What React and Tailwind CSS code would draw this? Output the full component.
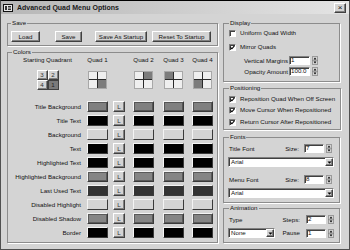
import React from "react";

const raised =
  "bg-[#d4d4d4] border border-t-white border-l-white border-r-[#404040] border-b-[#404040] shadow-[inset_-1px_-1px_0_#808080]";
const sunken =
  "bg-white border border-t-[#808080] border-l-[#808080] border-r-white border-b-white shadow-[inset_1px_1px_0_#404040]";

const Group = ({ label, className = "", legend = "", children }) => (
  <fieldset className={`border border-[#8c8c8c] shadow-[1px_1px_0_#fff] ${className}`}>
    <legend className={`px-[1px] leading-[8px] ${legend}`}>{label}</legend>
    {children}
  </fieldset>
);

const Button = ({ className = "", children }) => (
  <div className={`${raised} h-[11px] flex items-center justify-center whitespace-nowrap ${className}`}>
    {children}
  </div>
);

const Arrows = ({ className = "" }) => (
  <svg width="6" height="9" viewBox="0 0 6 9" className={className}>
    <rect x="0.5" y="0.5" width="5" height="8" fill="#d4d4d4" stroke="#9a9a9a" strokeWidth="1" />
    <line x1="0" y1="4.5" x2="6" y2="4.5" stroke="#808080" strokeWidth="0.6" />
    <path d="M1.6 3.4 L3 1.6 L4.4 3.4Z" fill="#000" />
    <path d="M1.6 5.6 L3 7.4 L4.4 5.6Z" fill="#000" />
  </svg>
);

const Spinner = ({ value, w = "w-[21px]", gap = "ml-[2px]" }) => (
  <div className="flex items-center">
    <div className={`${sunken} ${w} h-[9px] pl-[1px] flex items-center leading-none`}>{value}</div>
    <Arrows className={gap} />
  </div>
);

const DownTri = () => (
  <svg width="5" height="3" viewBox="0 0 5 3">
    <path d="M0.5 0.5 L4.5 0.5 L2.5 2.8Z" fill="#000" />
  </svg>
);

const Select = ({ value, className = "" }) => (
  <div className={`${sunken} h-[10px] flex items-center ${className}`}>
    <span className="flex-1 pl-[2px] leading-none">{value}</span>
    <div className={`${raised} w-[8px] h-full flex items-center justify-center`}>
      <DownTri />
    </div>
  </div>
);

const Check = ({ checked, label, className = "" }) => (
  <div className={`flex items-center h-[8px] ${className}`}>
    <div className={`${sunken} w-[7px] h-[7px] flex items-center justify-center`}>
      {checked && (
        <svg width="5" height="5" viewBox="0 0 5 5">
          <path d="M0.6 2.4 L1.9 3.8 L4.4 0.9" stroke="#000" strokeWidth="1.1" fill="none" />
        </svg>
      )}
    </div>
    <span className="ml-[4px] whitespace-nowrap">{label}</span>
  </div>
);

const widths = [
  "w-[79px]",
  "w-[21px]",
  "ml-[5px] w-[12px]",
  "ml-[8px] w-[21px]",
  "ml-[9px] w-[21px]",
  "ml-[8px] w-[21px]",
];

const Cols = ({ cells, first = "justify-center", className = "" }) => (
  <div className={`flex items-center ${className}`}>
    {cells.map((c, i) => (
      <div key={i} className={`${widths[i]} shrink-0 flex ${i === 0 ? first : "justify-center"} whitespace-nowrap`}>
        {c}
      </div>
    ))}
  </div>
);

const QuadIcon = ({ on }) => (
  <div className="w-[19px] h-[18px] border border-[#a8a8a8] grid grid-cols-2 grid-rows-2 gap-[1px] bg-[#2a2a2a]">
    {[0, 1, 2, 3].map((i) => (
      <div key={i} className={i === on ? "bg-[#7c7c7c]" : "bg-[#efefef]"} />
    ))}
  </div>
);

const Swatch = ({ color }) => (
  <div
    className={`w-[21px] h-[11px] border border-t-[#f4f4f4] border-l-[#f4f4f4] border-r-[#3a3a3a] border-b-[#3a3a3a] ${color}`}
  />
);

const rows = [
  ["Title Background", "bg-[#808080] shadow-[inset_0_0_0_1px_#555]"],
  ["Title Text", "bg-black border-black"],
  ["Background", "bg-[#d4d4d4]"],
  ["Text", "bg-black border-black"],
  ["Highlighted Text", "bg-black border-black"],
  ["Highlighted Background", "bg-[#858585] shadow-[inset_0_0_0_1px_#5a5a5a]"],
  ["Last Used Text", "bg-[#333] border-[#333]"],
  ["Disabled Highlight", "bg-[#d4d4d4]"],
  ["Disabled Shadow", "bg-[#858585] shadow-[inset_0_0_0_1px_#5a5a5a]"],
  ["Border", "bg-black border-black"],
];

export default function App() {
  return (
    <div className="w-[350px] h-[250px] bg-[#d4d4d4] border border-[#505050] border-t-black flex flex-col overflow-hidden font-['Liberation_Sans',Arial,sans-serif] text-[6.2px] leading-[8px] text-[#111]">
      <div className="h-[13px] shrink-0 flex items-center bg-linear-to-r from-[#b6b6b6] to-[#e4e4e4]">
        <svg width="10" height="8" viewBox="0 0 10 8" className="ml-[2px]">
          <rect x="0.5" y="0.5" width="9" height="7" fill="#e8e8e8" stroke="#111" />
          <rect x="2" y="2" width="2" height="4" fill="#333" />
          <rect x="5" y="2" width="3" height="1.5" fill="#333" />
          <rect x="5" y="4.5" width="3" height="1.5" fill="#333" />
        </svg>
        <span className="ml-[4px] text-[7px] font-bold text-[#1a1a1a] whitespace-nowrap">Advanced Quad Menu Options</span>
        <div className={`${raised} ml-auto mr-[3px] w-[12px] h-[10px] flex items-center justify-center text-[8px] leading-none`}>
          ×
        </div>
      </div>

      <div className="flex gap-[5px] pl-[6px] pt-[5px]">
        <div className="w-[211px] shrink-0 flex flex-col">
          <Group label="Save" className="px-[3px] pb-[3px]">
            <div className="mt-[4px] flex">
              <Button className="w-[29px]">Load</Button>
              <Button className="ml-[15px] w-[27px]">Save</Button>
              <Button className="ml-[13px] w-[52px]">Save As Startup</Button>
              <Button className="ml-[5px] w-[59px]">Reset To Startup</Button>
            </div>
          </Group>

          <Group label="Colors" className="mt-[2px] pb-[4px]" legend="ml-[4px]">
            <Cols className="h-[8px]" cells={["Starting Quadrant", "Quad 1", "", "Quad 2", "Quad 3", "Quad 4"]} />
            <Cols
              className="mt-[5px] h-[21px]"
              cells={[
                <div className="grid grid-cols-2 w-[22px]">
                  <Button className="h-[10px]! text-[#333]">3</Button>
                  <Button className="h-[10px]! text-[#333]">2</Button>
                  <Button className="h-[10px]! text-[#333]">4</Button>
                  <div className="h-[10px] bg-[#7a7a7a] border border-[#404040] flex items-center justify-center text-[#222]">1</div>
                </div>,
                <QuadIcon on={3} />,
                "",
                <QuadIcon on={1} />,
                <QuadIcon on={0} />,
                <QuadIcon on={2} />,
              ]}
            />
            <div className="mt-[11px] flex flex-col gap-[3px]">
              {rows.map(([name, color]) => (
                <Cols
                  key={name}
                  className="h-[11px]"
                  first="justify-end pr-[6px]"
                  cells={[
                    name,
                    <Swatch color={color} />,
                    <Button className="w-[12px] text-[#333]">L</Button>,
                    <Swatch color={color} />,
                    <Swatch color={color} />,
                    <Swatch color={color} />,
                  ]}
                />
              ))}
            </div>
          </Group>
        </div>

        <div className="w-[117px] shrink-0 flex flex-col">
          <Group label="Display" className="px-[5px] pb-[5px]">
            <Check className="mt-[2px]" label="Uniform Quad Width" />
            <Check className="mt-[6px]" checked label="Mirror Quads" />
            <div className="mt-[5px] flex items-center h-[9px]">
              <span className="w-[59px] text-right whitespace-nowrap">Vertical Margins</span>
              <div className="ml-[1px]">
                <Spinner value="1" />
              </div>
            </div>
            <div className="mt-[2px] flex items-center h-[9px]">
              <span className="w-[59px] text-right whitespace-nowrap">Opacity Amount</span>
              <div className="ml-[1px]">
                <Spinner value="100.0" />
              </div>
            </div>
          </Group>

          <Group label="Positioning" className="mt-[2px] px-[5px] pb-[3px]">
            <Check className="mt-[3px]" checked label="Reposition Quad When Off Screen" />
            <Check className="mt-[3px]" checked label="Move Cursor When Repositioned" />
            <Check className="mt-[4px]" checked label="Return Cursor After Repositioned" />
          </Group>

          <Group label="Fonts" className="mt-[3px] px-[5px] pb-[4px]">
            <div className="mt-[3px] h-[9px] flex items-center">
              <span>Title Font</span>
              <span className="ml-auto">Size:</span>
              <div className="ml-[5px] mr-[2px]">
                <Spinner value="7" w="w-[20px]" />
              </div>
            </div>
            <Select className="mt-[4px] -ml-[1px]" value="Arial" />
            <div className="mt-[8px] h-[9px] flex items-center">
              <span>Menu Font</span>
              <span className="ml-auto">Size:</span>
              <div className="ml-[5px] mr-[2px]">
                <Spinner value="8" w="w-[20px]" />
              </div>
            </div>
            <Select className="mt-[4px] -ml-[1px]" value="Arial" />
          </Group>

          <Group label="Animation" className="mt-[1px] px-[5px] pb-[4px]">
            <div className="mt-[3px] h-[9px] flex items-center">
              <span>Type</span>
              <span className="ml-auto">Steps:</span>
              <div className="ml-[6px]">
                <Spinner value="2" w="w-[20px]" />
              </div>
            </div>
            <div className="mt-[4px] h-[10px] flex items-center">
              <Select className="w-[47px] -ml-[1px]" value="None" />
              <span className="ml-auto">Pause</span>
              <div className="ml-[6px]">
                <Spinner value="1" w="w-[20px]" />
              </div>
            </div>
          </Group>
        </div>
      </div>
    </div>
  );
}
